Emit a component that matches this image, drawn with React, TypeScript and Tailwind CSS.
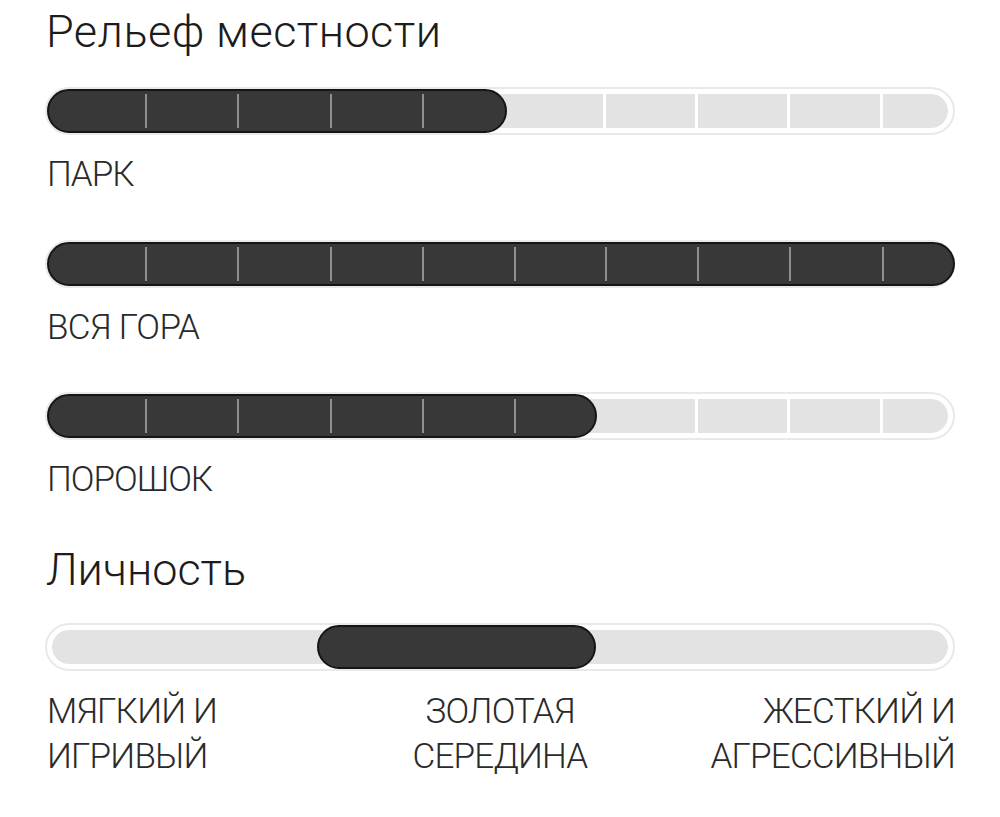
import React from "react";

const TICKS = [98, 190, 283, 375, 467, 558, 650, 742, 835];

function SegBar({ fillEnd }: { fillEnd: number }) {
  const firstAfter = TICKS.findIndex((t) => t > fillEnd);
  return (
    <div className="relative h-[48px] w-full rounded-full border-2 border-[#e9e9e9] bg-white p-[5px]">
      <div className="relative h-full w-full overflow-hidden rounded-full bg-[#e3e3e3]">
        {TICKS.map((t, i) =>
          t > fillEnd && i !== firstAfter ? (
            <div
              key={i}
              className="absolute top-0 h-full w-[3px] bg-white"
              style={{ left: t - 7 }}
            />
          ) : null
        )}
      </div>
      <div
        className="absolute left-0 top-0 h-[44px] rounded-full border-2 border-[#151515] bg-[#383838]"
        style={{ width: fillEnd }}
      >
        {TICKS.map((t, i) =>
          t < fillEnd - 20 ? (
            <div
              key={i}
              className="absolute top-[3px] h-[34px] w-[2px] bg-[#8e8e8e]"
              style={{ left: t - 2 }}
            />
          ) : null
        )}
      </div>
    </div>
  );
}

export default function App() {
  return (
    <div
      className="w-[1000px] h-[817px] bg-white px-[45px] pt-[5px] font-light text-[#1c1c1c]"
      style={{ fontFamily: "Roboto, 'Noto Sans', sans-serif" }}
    >
      <div className="text-[45px] leading-[53px] tracking-[0.45px] pl-[1px]">Рельеф местности</div>

      <div className="mt-[29px]">
        <SegBar fillEnd={460} />
        <div className="mt-[19px] text-[35px] leading-[41px] tracking-[-1px] text-[#2a2a2a] pl-[2px]">ПАРК</div>
      </div>

      <div className="mt-[45px]">
        <SegBar fillEnd={908} />
        <div className="mt-[19px] text-[35px] leading-[41px] tracking-[-0.6px] text-[#2a2a2a] pl-[2px]">ВСЯ ГОРА</div>
      </div>

      <div className="mt-[44px]">
        <SegBar fillEnd={550} />
        <div className="mt-[19px] text-[35px] leading-[41px] tracking-[-1px] text-[#2a2a2a] pl-[2px]">ПОРОШОК</div>
      </div>

      <div className="mt-[43px] text-[45px] leading-[53px] pl-[1px]">Личность</div>

      <div className="mt-[27px]">
        <div className="relative h-[48px] w-full rounded-full border-2 border-[#e9e9e9] bg-white p-[5px]">
          <div className="h-full w-full rounded-full bg-[#e3e3e3]" />
          <div className="absolute left-[270px] top-0 h-[44px] w-[279px] rounded-full border-2 border-[#151515] bg-[#383838]" />
        </div>
        <div className="mt-[18px] grid grid-cols-3 text-[35px] leading-[45px] tracking-[-0.8px] text-[#2a2a2a]">
          <div className="pl-[2px]">
            МЯГКИЙ И
            <br />
            ИГРИВЫЙ
          </div>
          <div className="text-center">
            ЗОЛОТАЯ
            <br />
            СЕРЕДИНА
          </div>
          <div className="text-right">
            ЖЕСТКИЙ И
            <br />
            АГРЕССИВНЫЙ
          </div>
        </div>
      </div>
    </div>
  );
}
